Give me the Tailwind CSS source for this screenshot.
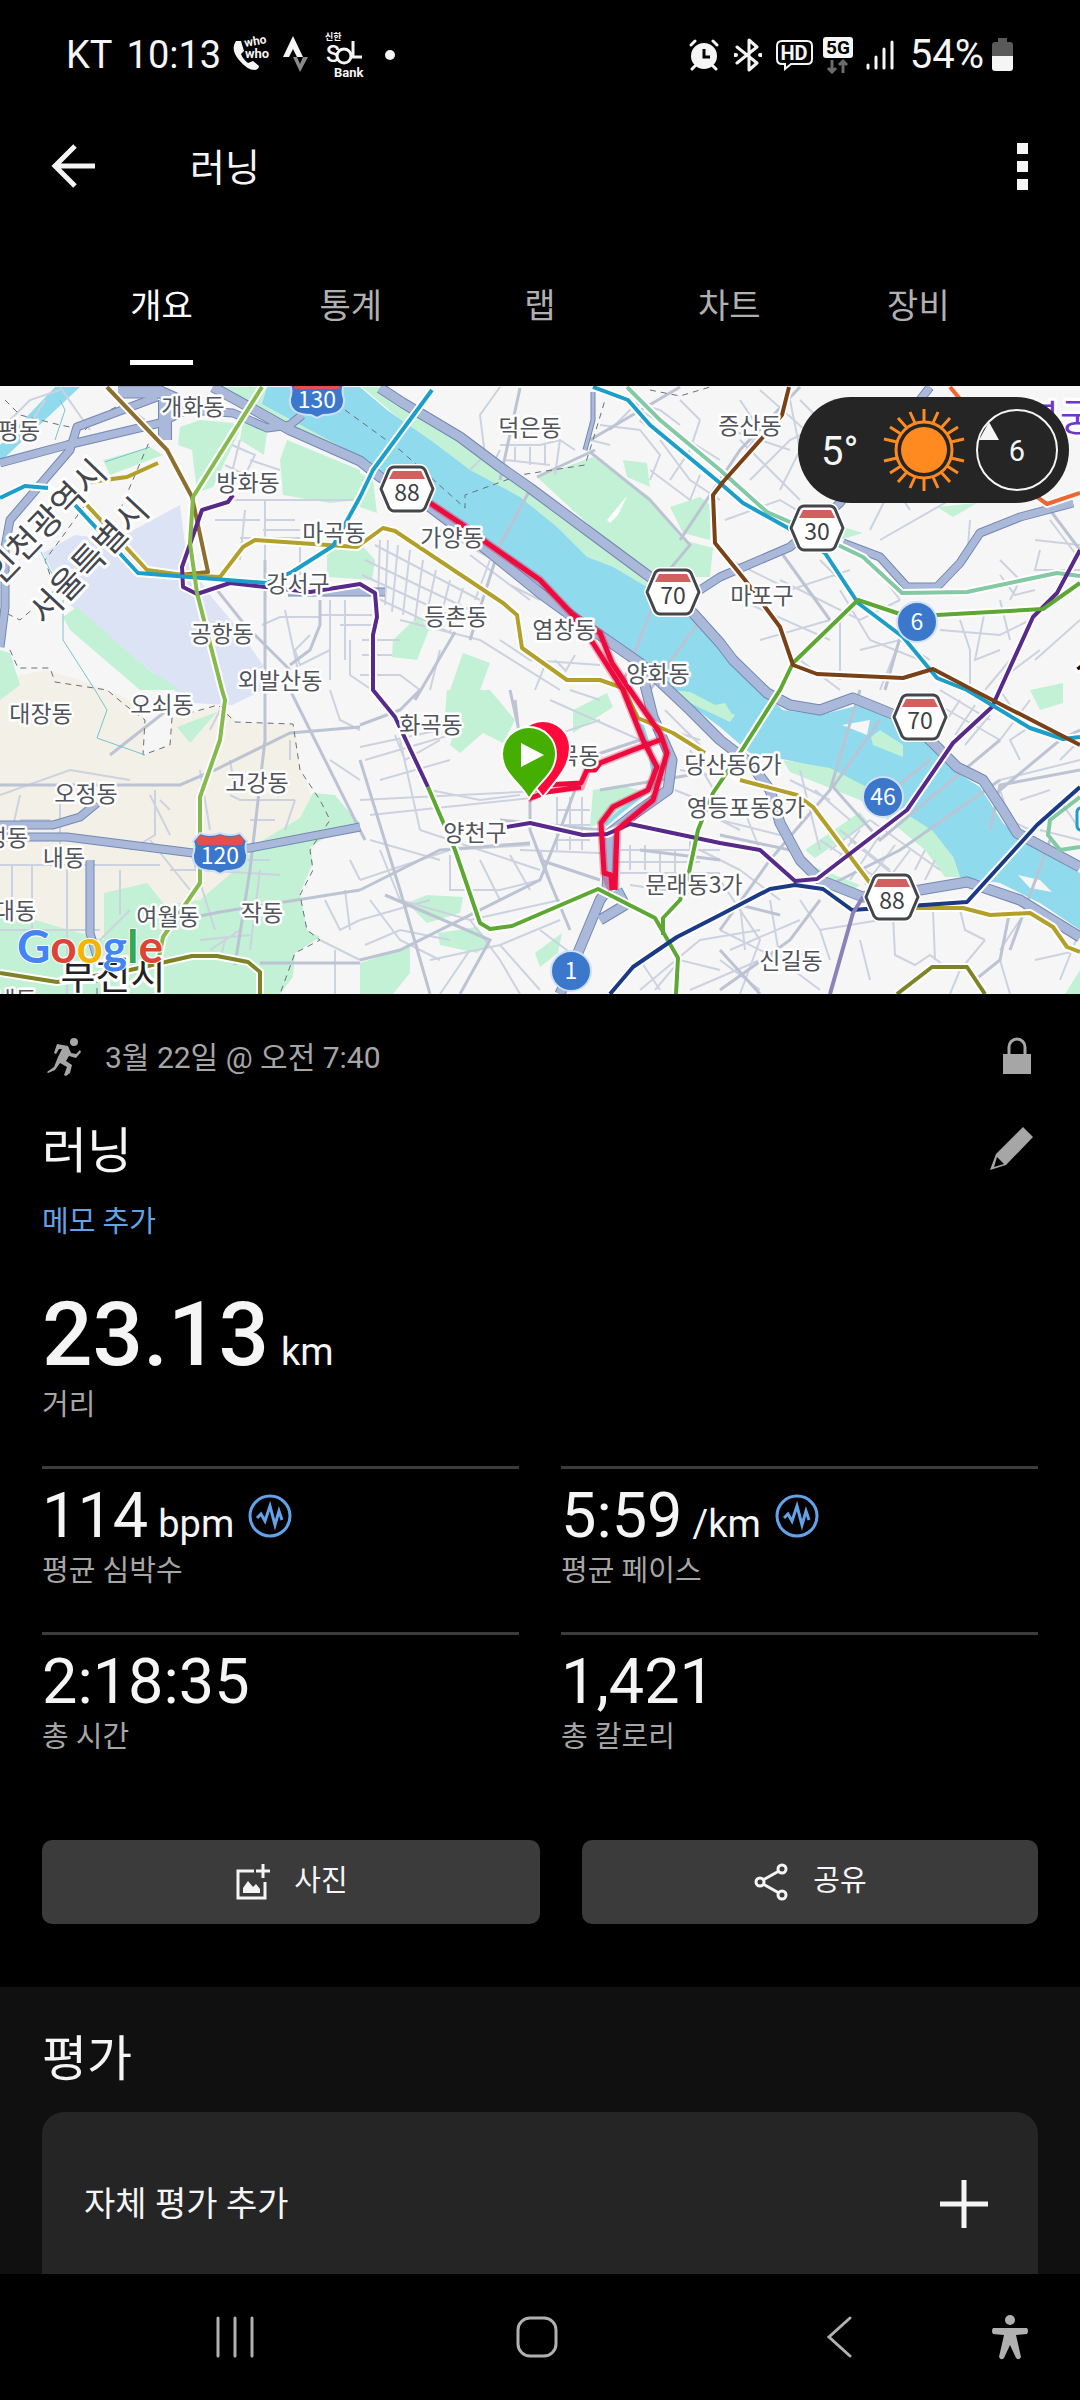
<!DOCTYPE html>
<html lang="ko">
  <head>
    <meta charset="UTF-8" />
    <meta name="viewport" content="width=device-width, initial-scale=1.0" />
    <title>러닝</title>
    <script src="https://cdn.jsdelivr.net/npm/@tailwindcss/browser@4"></script>
  </head>
  <body class="bg-black text-[#f5f5f5] font-[Roboto,'Noto_Sans_CJK_KR',sans-serif]">
    <div class="flex flex-col min-h-screen">
      <!-- status bar -->
      <div class="flex items-center justify-between h-[110px] pl-[66px] pr-[67px] text-[38px] leading-none">
        <div class="flex items-center">
          <span>KT</span>
          <span class="ml-[14px]">10:13</span>
          <svg class="ml-[10px] w-[40px] h-[44px]" viewBox="0 0 40 44" fill="none">
            <path d="M5 8q-6 8 3 19 8 10 16 10 4-1 4-4l-6-5-5 2q-6-5-7-9l3-3-3-10z" fill="#f5f5f5" />
            <text x="14" y="14" font-size="12" font-weight="700" fill="#f5f5f5" transform="rotate(-10 14 14)">who</text>
            <text x="14" y="25" font-size="13" font-weight="700" fill="#f5f5f5">who</text>
          </svg>
          <svg class="ml-3 w-[26px] h-[38px]" viewBox="0 0 26 38">
            <path d="M10 0l10 21h-6l-4-8-4 8H0z" fill="#f5f5f5" />
            <path d="M10 21h4l3 7 3-7h5l-8 15z" fill="#8a8a8a" />
          </svg>
          <svg class="ml-4 w-[40px] h-[48px]" viewBox="0 0 40 48" fill="#f5f5f5">
            <text x="0" y="9" font-size="9" font-weight="700">신한</text>
            <text x="1" y="31" font-size="23" font-weight="500">S</text>
            <path d="M28 10v16h9" fill="none" stroke="#f5f5f5" stroke-width="3" />
            <circle cx="19" cy="25" r="7" fill="#000" stroke="#f5f5f5" stroke-width="3" />
            <text x="9" y="46" font-size="13" font-weight="700">Bank</text>
          </svg>
          <span class="ml-5 size-[10px] rounded-full bg-[#f5f5f5]"></span>
        </div>
        <div class="flex items-center">
          <svg class="w-[30px] h-[32px]" viewBox="0 0 30 32" fill="none" stroke="#f5f5f5" stroke-width="3" stroke-linecap="round">
            <circle cx="15" cy="17" r="13" fill="#f5f5f5" stroke="none" />
            <path d="M2 6l4-4M28 6l-4-4M6 27l-3 3M24 27l3 3" />
            <path d="M15 10v8h6" stroke="#000" stroke-linecap="butt" />
          </svg>
          <svg class="ml-[15px] w-[28px] h-[34px]" viewBox="0 0 28 34" fill="none" stroke="#f5f5f5" stroke-width="3" stroke-linejoin="round" stroke-linecap="round">
            <path d="M3 9l20 16-8 7V2l8 7L3 25" />
            <path d="M1 17h1M26 17h1" stroke-width="4" />
          </svg>
          <svg class="ml-[14px] w-[37px] h-[32px]" viewBox="0 0 37 32" fill="none">
            <path d="M6 2h25q5 0 5 5v13q0 5-5 5H15l-6 5v-5H6q-5 0-5-5V7q0-5 5-5z" stroke="#f5f5f5" stroke-width="2" />
            <text x="18" y="21" font-size="20" font-weight="700" fill="#f5f5f5" text-anchor="middle">HD</text>
          </svg>
          <svg class="ml-[10px] w-[30px] h-[38px]" viewBox="0 0 30 38" fill="none">
            <rect x="0" y="1" width="30" height="21" rx="3" fill="#f5f5f5" />
            <text x="15" y="18" font-size="19" font-weight="700" fill="#000" text-anchor="middle">5G</text>
            <path d="M9 24v12M5 32l4 4 4-4M20 37V25M16 29l4-4 4 4" stroke="#6b6b6b" stroke-width="3" />
          </svg>
          <svg class="ml-[13px] w-[28px] h-[32px]" viewBox="0 0 28 32" stroke="#f5f5f5" stroke-width="3" stroke-linecap="round">
            <path d="M2 26v3M10 18v11M18 10v19M26 3v26" />
          </svg>
          <span class="ml-[16px] text-[40px]">54%</span>
          <svg class="ml-2 w-[21px] h-[34px]" viewBox="0 0 21 34">
            <path d="M6 0h9v4h3q3 0 3 3v11H0V7q0-3 3-3h3z" fill="#5a5a5a" />
            <path d="M0 18h21v12q0 3-3 3H3q-3 0-3-3z" fill="#f5f5f5" />
          </svg>
        </div>
      </div>

      <!-- app bar -->
      <header class="flex items-center h-[112px] pl-[50px] pr-[40px]">
        <button type="button" aria-label="뒤로">
          <svg class="w-[48px] h-[48px]" viewBox="0 0 48 48" fill="none" stroke="#f5f5f5" stroke-width="5">
            <path d="M45 24H6M25 4L5 24l20 20" />
          </svg>
        </button>
        <h1 class="ml-[92px] pt-1 text-[38px] leading-[56px]">러닝</h1>
        <button type="button" aria-label="메뉴" class="ml-auto flex flex-col gap-[7px] px-3">
          <span class="size-[11px] bg-[#f5f5f5]"></span>
          <span class="size-[11px] bg-[#f5f5f5]"></span>
          <span class="size-[11px] bg-[#f5f5f5]"></span>
        </button>
      </header>

      <!-- tabs -->
      <nav class="grid grid-cols-5 justify-items-center px-[67px] pb-[21px] text-[34px] leading-[54px] text-[#b0b0b0]">
        <a href="#" class="pt-[57px] pb-[27px] border-b-[5px] border-white text-white">개요</a>
        <a href="#" class="pt-[57px] pb-[27px] border-b-[5px] border-transparent">통계</a>
        <a href="#" class="pt-[57px] pb-[27px] border-b-[5px] border-transparent">랩</a>
        <a href="#" class="pt-[57px] pb-[27px] border-b-[5px] border-transparent">차트</a>
        <a href="#" class="pt-[57px] pb-[27px] border-b-[5px] border-transparent">장비</a>
      </nav>

      <!-- route map -->
      <div class="relative">
        <svg class="block w-full h-[608px]" viewBox="0 386 1080 608" preserveAspectRatio="xMidYMid slice" fill="none">
          <rect x="0" y="386" width="1080" height="608" fill="#f6f6f7" />
          <!-- land use -->
          <path fill="#f3f0e7" d="M0 680L45 670L80 680L107 690L130 700L145 720L143 755L170 745L172 718L225 705L235 722L293 724L300 765L320 820L310 860L250 890V994H0Z" />
          <path fill="#dce3f5" d="M43 553L75 535L115 540L180 505L187 560L210 595L235 625L263 665V690L232 705L190 703L70 605Z" />
          <g fill="#c2f1d5">
            <path d="M180 427L200 420L233 423L240 430L213 487L197 493L192 450L178 445Z" />
            <path d="M287 440L360 470V500L330 503L283 495L280 460Z" />
            <path d="M225 387H262L362 448V468L300 434Z" />
            <path d="M103 460L150 447L163 455L110 475Z" />
            <path d="M63 617L77 607L117 643L153 673L180 690H140L70 630Z" />
            <path d="M0 650L10 653L20 685L0 700Z" />
            <path d="M327 550L360 543L375 560L372 580L327 577Z" />
            <path d="M243 420L267 432L264 455L240 440Z" />
            <path d="M177 727L217 712L190 743Z" />
            <path d="M104 893L147 883L165 905L200 900L235 870L260 842L300 818L313 793L335 795L350 813L360 823L333 833L310 847L313 863L300 893L307 930L320 937L295 953L293 977L280 994H0V917L35 920L104 940Z" />
            <path d="M447 690H490L515 720L503 743L483 733L460 753L450 745L455 730L445 715Z" />
            <path d="M573 710L607 693L613 707L573 733Z" />
            <path d="M593 790L620 785L650 793L610 820L590 827Z" />
            <path d="M407 903L427 895L463 897L460 913L427 923Z" />
            <path d="M438 933L477 927L490 943L477 953L440 945Z" />
            <path d="M360 963L410 947V973L393 994H360Z" />
            <path d="M535 953L562 933L558 953L540 967Z" />
            <path d="M360 473L373 480L377 513L360 507Z" />
            <path d="M362 387H385L470 440L530 490L600 540L655 590L720 650L690 625L640 588L587 560L520 500L430 445Z" />
            <path d="M537 477L593 457L650 497L683 540L713 548L710 577L660 577L600 535Z" />
            <path d="M670 507L700 497L713 507L710 540L683 533Z" />
            <path d="M623 460L647 463L650 487L627 477Z" />
            <path d="M393 640L417 617L430 627L417 660L392 657Z" />
            <path d="M463 653L490 663L480 690H450Z" />
            <path d="M937 507L977 503L953 517Z" />
            <path d="M843 527L863 533L840 540Z" />
            <path d="M1030 690L1063 683V703L1040 710Z" />
            <path d="M1065 994L1080 970V994Z" />
          </g>
          <path fill="#fff" d="M607 520L627 496L618 515L610 523Z" />
          <!-- river -->
          <path fill="#90daee" d="M267 387H360L387 410L433 442L460 460L520 497L557 527L587 557L613 567L647 587L693 620L720 647L757 688L783 710L820 715L860 705L907 727L933 740L953 770L980 787L1003 823L1020 840L1080 873V930L1040 903L1000 883L960 877L953 857L933 833L897 810L863 787L830 770L787 760L750 753L720 727L670 690L643 663L600 637L573 613L487 543L430 503L360 457L262 404Z" />
          <path fill="#90daee" d="M0 445L55 387H80L0 462Z" />
          <g fill="#c2f1d5">
            <path d="M783 760L830 768L863 785L897 808L933 831L953 857L960 877H945L925 850L895 825L860 800L790 772Z" />
            <path d="M805 850L860 812L868 822L815 858Z" />
            <path d="M810 865L860 885L850 892L815 875Z" />
            <path d="M871 737L880 730L903 745V757L873 745Z" />
            <path d="M673 690L690 692L735 715L730 722L690 703Z" />
            <path d="M433 442L450 440L500 478L520 497L470 470Z" />
            <path d="M715 705L725 703L733 716Z" />
          </g>
          <path fill="#f6f6f7" d="M842 725L870 720L867 735Z M1018 875L1040 880L1052 892L1030 888Z" />
          <!-- minor streets -->
          <g stroke="#ccd2df" stroke-width="2">
            <path d="M235 500H360M265 500V680M240 538H300M245 510L240 560M215 520H260M263 530H300M265 520H295M300 540V575M330 600V680M345 600V660M320 615H372M285 610L300 680M340 625H375M262 625L280 617H320M310 635L295 650L300 665L330 650M350 640V675L372 690" />
            <path d="M232 445L255 455L245 475L225 465M240 440L230 480M250 460L280 470" />
            <path d="M10 420L30 400L60 390M60 387L90 430M120 400L145 420M20 440L45 400" />
            <path d="M380 540L378 600M388 540L385 605M398 545L392 612M410 550L403 615M423 560L415 620M436 570L425 622M450 580L438 628M463 588L450 632M365 560L470 610M362 575L460 620M360 590L455 635M375 545L480 600M440 530L520 575M470 555L530 600M490 560L475 600M510 585L540 600" />
            <path d="M362 640H400M362 655H392M360 675H400L420 690M440 650L430 690M400 620L480 640L560 690M500 640L530 660L600 665M535 690L545 665L560 675M555 660L565 670M575 655L565 672" />
            <path d="M500 387L480 415L485 455L470 470M500 445H540L560 440L575 450M500 450L495 460M515 447V462M530 447V465M545 445V465M505 460L550 465M560 440L555 475M590 440L610 445M600 425L640 430L660 455L650 480M640 410L720 460M660 440L690 480L720 500M670 480L690 450L700 420M620 400L660 410L680 425M610 430L640 400M680 400L700 420M650 470L690 500L700 475" />
            <path d="M740 400L760 430L740 460M730 430L790 450M750 480L790 440L830 420M790 400L800 450L780 490M740 440L800 500M760 390L850 470M820 420L800 400M725 520L780 500L830 530M730 560L790 590L850 570M740 600L830 640M780 580L860 620L900 600M760 640L830 620M800 660L840 690M840 620V680M870 560L900 600M890 490L870 530M910 510L890 480M880 540L950 500M840 590L870 640L920 660M900 640L880 690M960 620L970 650V690M985 610L975 660L1000 650M1000 600L1010 640M940 630L1000 635L1030 620M1000 560L1020 580L1010 600M1035 540L1080 545M1040 550L1035 570H1080M1050 520L1080 560M860 650L900 640L930 660M820 560L850 590M970 520L967 560M1000 575L1015 595L1035 590M1035 660L1080 620M1000 680L1040 650M985 690L1010 660" />
            <path d="M360 747L440 730M365 760L450 735M360 800L560 790M370 815L540 797M395 735L405 760L440 740M380 780L450 760M430 790L480 800L520 795M400 740L420 830M420 830L480 850L540 870M370 840L440 860M360 880L450 850L530 845M380 850L400 900M450 855V890L500 890L540 880M480 860L500 900M510 855L530 890M540 850L550 880M400 900L470 920L560 900M370 900L400 940L440 960M360 920L430 900M470 920L500 960L520 994M430 960L500 945L560 920M440 994L470 950M500 945L540 990M365 945L400 930L450 940M540 930L580 960M557 797V850M570 797V850M582 797V850M557 810H590M555 825H590M555 840H590M520 850L600 853M620 850H720M630 845V870M645 845V870M660 850V880M675 850V890M690 840V880M610 862H700M620 873H720M630 885L700 895" />
            <path d="M540 740L600 720M550 700L640 740M570 690L600 700M670 730L700 740M665 710L700 745M680 770L710 775M675 790L700 800M690 750L720 800M700 810L740 830M720 820L780 835M740 800L760 850M700 850L740 870" />
            <path d="M740 870L780 900M720 880L760 940L740 994M720 930L780 960L820 950M730 950L800 920M770 900L780 960L820 990M800 900L820 930L880 920M820 930L830 960M860 940L870 980M893 915L895 955L915 965L930 955L950 970M960 910L965 930L985 940M985 940L960 970L950 994M1000 960L1010 994M933 910L935 960M1080 930L1060 980M1035 960L1080 950M720 960L760 990M640 990L700 940L760 930M655 990L680 960L720 970M690 990L760 960M640 960L660 990M740 905L745 950M1020 920L1000 950" />
            <path d="M790 780L830 800M800 770L820 850M815 790L850 820M830 850L870 820M820 840L880 880M840 830L890 870M860 830L830 870M880 835L850 880M895 845L865 885M910 850L880 890M850 840L900 880M870 820L940 870M925 850L915 870M935 860L925 880" />
            <path d="M930 700L1000 740M940 690L990 720M960 700L940 730M975 705L955 735M990 715L965 745M1000 740L1030 700M1020 720L1000 690M1040 720L1010 740L1020 760M1000 780L1080 760M1080 740L1060 760M1000 790L1010 820L1030 830M1020 800L1050 790M1040 830L1080 840M1060 800L1080 830" />
            <path d="M0 795L70 770L100 775L130 780M20 795L10 840M50 820H20M60 800V860M0 865H160M12 865V920M32 865V930M67 850V994M42 930H100M0 930H60M120 870V915M155 790V835L130 850M150 795L170 835M200 770L210 830M160 800L170 810M230 795L240 800L295 800M235 790L230 760M295 800L285 830M250 820H275M240 860H270M210 730L225 700M190 850L215 930M260 870L250 950M290 740V760M330 690L340 720L360 730M330 760L360 780M350 860L360 880M325 900L340 930L360 920M345 890L350 930M320 940L360 960M335 950V994M150 840L190 890M130 910L100 940M170 870H200L280 875M210 950L240 930M225 940L220 960M200 940L250 935" />
          </g>
          <g stroke="#bcc3d3" stroke-width="3">
            <path d="M0 785H180L215 770L290 733L360 727M265 560V740L250 870L235 965M320 600V625L310 650L290 665M290 690L365 840M217 590L245 625L290 670M180 920L220 912L360 890M260 963H360M110 755L180 700" />
            <path d="M520 388L500 480M590 440L680 387M590 452L650 500L690 545L665 575L620 690M595 450L537 477M530 490L500 545L470 640M640 420L720 480M680 540L740 450L800 387M700 620L650 690M455 632L415 700M510 690L530 780V830L545 870M360 725L400 710L420 690M515 700L522 760L530 790M595 755L640 740M600 790L690 775M360 890L440 850L530 843M385 895L490 940L460 994M360 760L400 890L430 994M360 960L400 950L540 880L560 830L575 790M600 830L500 820M600 880L540 860M545 870L570 930M640 850L720 860" />
            <path d="M860 690L830 790L770 860L720 930M880 720L833 787L880 840L1000 740M930 760L880 800M1000 780L900 850L820 890M1010 950L1050 840M1080 770L1000 785L990 830M1000 790L1060 740L1080 730M720 990L790 940L820 900M720 950L760 994M720 835L790 850M1010 910L1000 960L975 980M740 905L780 915M783 555L830 620M905 620L885 690M1050 510L1080 550" />
          </g>
          <!-- administrative borders -->
          <g stroke="#6b6f78" stroke-width="1" stroke-dasharray="6 5">
            <path d="M5 400L20 415L60 425L85 430L100 415L130 400M120 510L150 440M85 505L60 540L45 560L55 590L20 620L0 610M10 650L18 668L50 668L55 682L107 690L125 705L145 720L143 755L170 745L172 718L218 705L235 722L293 724L300 770L320 800L330 820L310 850L313 870L300 895L307 930L320 940L295 953L280 994" />
            <path d="M345 410L400 450L465 508V495L520 475L585 465L593 440L605 400M650 390L680 396L710 387M97 994V980" />
          </g>
          <g stroke="#79c3cf" stroke-width="1">
            <path d="M63 600V640L95 690L107 710L97 738L145 755M40 550L60 590M105 462L150 447M60 400L65 410L55 440" />
          </g>
          <!-- expressways -->
          <g stroke="#7388b3" stroke-width="9" stroke-linejoin="round">
            <path d="M0 463L67 445L160 423L187 410L233 413L267 428L290 425L302 415" />
            <path d="M157 397L77 427L70 450L10 520L5 547V607L0 647" />
            <path d="M213 387L260 413L290 430L360 461L380 477L430 507L487 550L540 593L573 617L607 640L640 663L690 710L720 740L750 763L770 790L780 823L800 860L820 880L863 897L920 890L967 882L1020 900L1080 937" stroke-width="11" />
            <path d="M118 392H160L178 400" stroke-width="13" />
            <path d="M165 400V440" stroke-width="14" />
            <path d="M593 392V420L585 450" stroke-width="5" />
            <path d="M380 388L403 403L460 437L500 467L530 488L600 540L650 577L693 613L720 643L733 660L767 693L790 705L820 710L853 698L907 720L933 743L957 767L983 780L1003 810L1017 833L1080 867" stroke-width="11" />
            <path d="M700 590L720 577L790 547L840 503L930 387" />
            <path d="M843 543L880 557L907 587H937L960 563L980 533L1020 517L1073 503" />
            <path d="M0 825H53L80 817L97 803M0 837H67L193 853L250 848L360 827M90 860V933L97 957" />
            <path d="M640 665L653 717L672 760L668 790L637 812L610 833L607 890L600 900L577 955L560 994M617 890L625 905L600 920" stroke-width="11" />
            <path d="M288 592H385" />
          </g>
          <g stroke="#aab9d9" stroke-width="7" stroke-linejoin="round">
            <path d="M0 463L67 445L160 423L187 410L233 413L267 428L290 425L302 415" />
            <path d="M157 397L77 427L70 450L10 520L5 547V607L0 647" />
            <path d="M213 387L260 413L290 430L360 461L380 477L430 507L487 550L540 593L573 617L607 640L640 663L690 710L720 740L750 763L770 790L780 823L800 860L820 880L863 897L920 890L967 882L1020 900L1080 937" stroke-width="9" />
            <path d="M118 392H160L178 400" stroke-width="11" />
            <path d="M165 400V440" stroke-width="12" />
            <path d="M593 392V420L585 450" stroke-width="3" />
            <path d="M380 388L403 403L460 437L500 467L530 488L600 540L650 577L693 613L720 643L733 660L767 693L790 705L820 710L853 698L907 720L933 743L957 767L983 780L1003 810L1017 833L1080 867" stroke-width="9" />
            <path d="M700 590L720 577L790 547L840 503L930 387" />
            <path d="M843 543L880 557L907 587H937L960 563L980 533L1020 517L1073 503" />
            <path d="M0 825H53L80 817L97 803M0 837H67L193 853L250 848L360 827M90 860V933L97 957" />
            <path d="M640 665L653 717L672 760L668 790L637 812L610 833L607 890L600 900L577 955L560 994M617 890L625 905L600 920" stroke-width="9" />
            <path d="M288 592H385" />
          </g>
          <path stroke="#90daee" stroke-width="4" d="M640 720L650 750L655 785L620 812L605 825" />

          <!-- subway lines -->
          <g stroke="#fff" stroke-width="8" stroke-linejoin="round">
            <path d="M107 387L167 450L192 497L208 572L180 575" />
            <path d="M85 503L147 570L183 575L220 577L243 547L255 540L357 547L383 528L395 531L503 603L517 615L522 648L567 680H600L623 688L638 718L673 733L705 753L740 780L797 795L813 807L870 883L890 908H963L990 915L1030 913L1053 927L1067 947L1080 952" />
            <path d="M262 387L193 497L190 543L197 593L222 690L225 700L220 740L200 797V883L163 937L157 967" />
            <path d="M0 498L25 486L48 488L75 505L138 573L267 583L292 572L333 546L360 497L373 470L432 390" />
            <path d="M593 387L628 400L650 425L720 483L743 503L788 528L825 553L858 603L903 637L937 678L967 690L1030 728L1063 739L1080 737" />
            <path d="M233 495L228 502L202 510L182 567L183 587L197 594L230 583L310 592L360 584L375 593L377 617L373 635V690L395 717L428 787L455 850L480 923L490 929L512 926L598 889L655 918L678 958L676 994" />
            <path d="M1080 583L1043 609L937 615L897 613L858 600L793 663L780 690L740 753L713 793L698 830L688 877L680 900L663 918V935" />
            <path d="M507 827L530 823L583 835L607 834L630 824L720 843L760 850L795 881L817 879L907 810L953 743L992 707L1033 617L1057 593L1080 550" />
            <path d="M610 994L633 967L677 937L720 915L770 889L795 885L823 889L852 910L967 902L1037 825L1080 787" />
            <path d="M897 994L932 967H967L985 994M0 973L57 982L130 970L192 956H217L248 962L260 972V994" />
            <path d="M789 387L782 415L763 437L723 482L713 495L715 543L745 580L780 627L793 665L817 674L903 678L933 669L973 690L1080 745" />
            <path d="M627 387L660 420L720 470L767 512L790 522L863 557L902 593L967 592L1057 573L1080 576" />
            <path d="M1037 497L1047 504L1080 493" />
          </g>
          <g stroke-width="4" stroke-linejoin="round">
            <path stroke="#8d6e2c" d="M107 387L167 450L192 497L208 572L180 575" />
            <path stroke="#b3a02a" d="M158 463L127 477L90 482M85 503L147 570L183 575L220 577L243 547L255 540L357 547L383 528L395 531L503 603L517 615L522 648L567 680H600L623 688L638 718L673 733L705 753M740 780L797 795L813 807L870 883L890 908H963L990 915L1030 913L1053 927L1067 947L1080 952" />
            <path stroke="#82c9a4" d="M627 387L660 420L720 470L767 512L790 522L863 557L902 593L967 592L1057 573L1080 576M1080 797L1050 820L1048 835L1060 850L1080 847" />
            <path stroke="#57298a" d="M233 495L228 502L202 510L182 567L183 587L197 594L230 583L310 592L360 584L375 593L377 617L373 635V690L395 717L428 787M507 827L530 823L583 835L607 834L630 824L720 843L760 850L795 881L817 879L907 810L953 743L992 707L1033 617L1057 593L1080 550" />
            <path stroke="#1c9ecb" d="M0 498L25 486L48 488M75 505L138 573L267 583L292 572L333 546L360 497L373 470L432 390M593 387L628 400L650 425L720 483L743 503L788 528L825 553L858 603L903 637L937 678L967 690L1030 728L1063 739L1080 737" />
            <path stroke="#84bb4c" d="M262 387L193 497L190 543L197 593L222 690L225 700L220 740L200 797V883L163 937L157 967" />
            <path stroke="#5da832" d="M428 787L455 850L480 923L490 929L512 926L598 889L655 918L678 958L676 994M1080 583L1043 609L937 615L897 613L858 600L793 663L780 690L740 753L713 793L698 830L688 877L680 900L663 918V935" />
            <path stroke="#1a3a86" d="M610 994L633 967L677 937L720 915L770 889L795 885L823 889L852 910L967 902L1037 825L1080 787" />
            <path stroke="#8d82b8" d="M863 897L853 913L830 994" />
            <path stroke="#7e8426" d="M897 994L932 967H967L985 994M0 973L57 982L130 970L192 956H217L248 962L260 972V994" />
            <path stroke="#7b4116" d="M789 387L782 415L763 437L723 482L713 495L715 543L745 580L780 627L793 665L817 674L903 678L933 669L973 690L1080 745" />
            <path stroke="#ee6730" d="M950 387L960 399M1037 497L1047 504L1080 493" />
          </g>

          <!-- recorded route -->
          <g stroke="#e8003a" stroke-opacity="0.3" stroke-width="8" stroke-linejoin="round">
            <path d="M430 503L463 525L487 543L540 580L573 615L593 643L623 690L643 740L657 767L648 790L613 807L601 823L604 873L612 890" />
            <path d="M573 615L600 633L612 663L630 690L660 733L667 753L653 800L617 830L615 890M660 740L633 750L600 763L587 770L581 787L547 790L528 799" />
          </g>
          <g stroke="#ee0a3c" stroke-width="5" stroke-linejoin="round">
            <path d="M430 503L463 525L487 543L540 580L573 615L593 643L623 690L643 740L657 767L648 790L613 807L601 823L604 873L611 875L612 890" />
            <path d="M573 615L600 633L612 663L630 690L660 733L667 753L653 800L617 830L615 890M660 740L633 750L600 763L595 770H587L581 783L545 785M581 787L547 792L528 799" />
          </g>

          <!-- place names -->
          <g font-family="'Noto Sans CJK KR', sans-serif" font-size="23" fill="#51545b" stroke="#fff" stroke-width="5" stroke-linejoin="round" paint-order="stroke" text-anchor="middle">
            <text x="193" y="415">개화동</text>
            <text x="19" y="439">평동</text>
            <text x="248" y="491">방화동</text>
            <text x="334" y="541">마곡동</text>
            <text x="298" y="592">강서구</text>
            <text x="222" y="642">공항동</text>
            <text x="280" y="689">외발산동</text>
            <text x="530" y="436">덕은동</text>
            <text x="452" y="546">가양동</text>
            <text x="456" y="625">등촌동</text>
            <text x="564" y="638">염창동</text>
            <text x="658" y="682">양화동</text>
            <text x="750" y="434">증산동</text>
            <text x="762" y="604">마포구</text>
            <text x="41" y="722">대장동</text>
            <text x="162" y="713">오쇠동</text>
            <text x="86" y="802">오정동</text>
            <text x="257" y="791">고강동</text>
            <text x="7" y="846">성동</text>
            <text x="64" y="866">내동</text>
            <text x="15" y="919">대동</text>
            <text x="168" y="925">여월동</text>
            <text x="262" y="921">작동</text>
            <text x="431" y="733">화곡동</text>
            <text x="568" y="764">신목동</text>
            <text x="475" y="841">양천구</text>
            <text x="733" y="773">당산동6가</text>
            <text x="746" y="816">영등포동8가</text>
            <text x="694" y="893">문래동3가</text>
            <text x="791" y="969">신길동</text>
            <text x="5" y="1008">송내동</text>
          </g>
          <g font-family="'Noto Sans CJK KR', sans-serif" fill="#43464c" stroke="#fff" stroke-width="6" stroke-linejoin="round" paint-order="stroke" text-anchor="middle">
            <text x="0" y="12" font-size="34" transform="translate(46 522) rotate(-46)">인천광역시</text>
            <text x="0" y="12" font-size="34" transform="translate(89 561) rotate(-47)">서울특별시</text>
            <text x="113" y="989" font-size="38" fill="#222">부천시</text>
            <text x="1060" y="431" font-size="38" fill="#6d37cf">복궁</text>
            <text x="1092" y="674" font-size="38" fill="#111">서</text>
          </g>
          <rect x="1077" y="808" width="20" height="22" rx="4" fill="#fff" stroke="#1c9ecb" stroke-width="3" />

          <!-- road shields -->
          <defs>
            <g id="hex">
              <path d="M-26 0L-18-19Q-16-22-13-22H13Q16-22 18-19L26 0L18 19Q16 22 13 22H-13Q-16 22-18 19Z" fill="#fff" stroke="#fff" stroke-width="6" stroke-linejoin="round" />
              <path d="M-26 0L-18-19Q-16-22-13-22H13Q16-22 18-19L26 0L18 19Q16 22 13 22H-13Q-16 22-18 19Z" fill="#fff" stroke="#43464a" stroke-width="3" stroke-linejoin="round" />
              <path d="M-14-18H14L18-10H-18Z" fill="#d3605f" />
            </g>
            <g id="shield">
              <path d="M-20-20Q-10-16 0-20Q10-16 20-20L27-12Q24-7 27 2Q28 18 6 18L0 21L-6 18Q-28 18-27 2Q-24-7-27-12Z" fill="#3b78cc" stroke="#cfe0fa" stroke-width="2" />
              <path d="M-20-18Q-10-14 0-18Q10-14 20-18L24-13L22-8H-22L-24-13Z" fill="#e0504d" />
            </g>
          </defs>
          <g font-family="'Noto Sans CJK KR', sans-serif" font-size="23" fill="#3c3f44" text-anchor="middle">
            <use href="#hex" x="407" y="489" /><text x="407" y="501">88</text>
            <use href="#hex" x="673" y="592" /><text x="673" y="604">70</text>
            <use href="#hex" x="817" y="528" /><text x="817" y="540">30</text>
            <use href="#hex" x="920" y="717" /><text x="920" y="729">70</text>
            <use href="#hex" x="892" y="897" /><text x="892" y="909">88</text>
          </g>
          <g font-family="'Noto Sans CJK KR', sans-serif" font-size="23" fill="#fff" text-anchor="middle">
            <use href="#shield" x="317" y="397" /><text x="317" y="408">130</text>
            <use href="#shield" x="220" y="853" /><text x="220" y="864">120</text>
            <circle cx="917" cy="622" r="20" fill="#3b78cc" stroke="#cfe0fa" stroke-width="2" /><text x="917" y="630">6</text>
            <circle cx="883" cy="797" r="20" fill="#3b78cc" stroke="#cfe0fa" stroke-width="2" /><text x="883" y="805">46</text>
            <circle cx="571" cy="971" r="20" fill="#3b78cc" stroke="#cfe0fa" stroke-width="2" /><text x="571" y="979">1</text>
          </g>

          <!-- finish and start pins -->
          <path d="M543 797C530 780 516 768 516 748A27 27 0 0 1 570 748C570 768 556 780 543 797Z" fill="#ff0a3a" stroke="#fff" stroke-width="2" />
          <path d="M529 799C520 782 502 774 502 754A27 27 0 0 1 556 754C556 774 538 782 529 799Z" fill="#45ae00" stroke="#fff" stroke-width="2" />
          <path d="M521 743L544 755L521 767Z" fill="#fff" />

          <text x="17" y="963" font-family="Lato, sans-serif" font-size="46" font-weight="700" stroke="#fff" stroke-width="2" paint-order="stroke"><tspan fill="#4485f4">G</tspan><tspan fill="#db4437">o</tspan><tspan fill="#f4b400">o</tspan><tspan fill="#4485f4">g</tspan><tspan fill="#35a853">l</tspan><tspan fill="#db4437">e</tspan></text>
        </svg>

        <!-- weather -->
        <div class="absolute top-[11px] right-[11px] flex items-center h-[106px] w-[271px] pl-[23px] rounded-full bg-[#252525]">
          <span class="w-[60px] pt-1 text-[40px] leading-none">5°</span>
          <svg class="w-[86px] h-[86px]" viewBox="-43 -43 86 86" fill="none" stroke="#ff8a1f" stroke-width="3">
            <circle r="23" fill="#ff8a1f" stroke="none" />
            <circle r="28" />
            <path d="M0-28V-41M9-27L14-38M17-22L26-32M23-16L34-23M27-8L40-11M27 8L40 11M23 16L34 23M17 22L26 32M9 27L14 38M0 28V41M-9 27L-14 38M-17 22L-26 32M-23 16L-34 23M-27 8L-40 11M-27-8L-40-11M-23-16L-34-23M-17-22L-26-32M-9-27L-14-38" />
          </svg>
          <svg class="ml-2 w-[84px] h-[84px]" viewBox="-42 -42 84 84" fill="none">
            <circle r="40" stroke="#f5f5f5" stroke-width="2" />
            <path d="M-38-10L-28-28L-18-10Z" fill="#f5f5f5" />
            <text x="0" y="11" font-size="29" fill="#f5f5f5" text-anchor="middle">6</text>
          </svg>
        </div>
      </div>

      <!-- activity summary -->
      <main class="px-[42px] pt-[34px] pb-[63px]">
        <div class="flex items-center h-[56px] text-[#a6a6a6]">
          <svg class="w-[42px] h-[42px]" viewBox="0 0 42 42" fill="#a6a6a6">
            <circle cx="32" cy="7" r="4" />
            <path d="M15 9L26 11L29 18L34 19L38 15L39 17L34 23L27 21L24 26L30 30L28 38L24 41L22 40L25 32L18 28L13 35L6 38L5 37L12 32L16 22L20 14H17L14 19L12 18Z" />
          </svg>
          <span class="ml-[21px] pt-1 text-[30px] leading-[40px]">3월 22일 @ 오전 7:40</span>
          <svg class="ml-auto w-[42px] h-[42px]" viewBox="0 0 42 42" fill="none">
            <path d="M13 20V12a8 8 0 0 1 16 0v8" stroke="#a6a6a6" stroke-width="3" />
            <rect x="7" y="19" width="28" height="20" fill="#a6a6a6" />
          </svg>
        </div>
        <div class="flex items-center justify-between mt-[22px] h-[88px]">
          <h2 class="pt-1 text-[49px] leading-[70px]">러닝</h2>
          <button type="button" aria-label="이름 편집">
            <svg class="w-[48px] h-[48px]" viewBox="0 0 48 48">
              <path d="M33 1L43 11L16 39L0 44L6 28Z" fill="#a6a6a6" />
              <path d="M7 31L14 38L4 41Z" fill="#000" />
            </svg>
          </button>
        </div>
        <a href="#" class="block w-max text-[29px] leading-[56px] text-[#62a2e8]">메모 추가</a>

        <p class="flex items-baseline mt-[35px] text-[89px] leading-[100px] font-medium">23.13<span class="ml-3 text-[38px] leading-none font-normal">km</span></p>
        <p class="text-[29px] leading-[40px] text-[#a6a6a6]">거리</p>

        <div class="grid grid-cols-2 gap-x-[42px] mt-[41px]">
          <div class="border-t-3 border-[#3c3c3c] pt-[15px] pb-[41px]">
            <div class="flex items-center">
              <p class="flex items-baseline text-[63px] leading-[64px]">114<span class="ml-[10px] text-[38px] leading-none">bpm</span></p>
              <svg class="ml-[13px] w-[46px] h-[46px]" viewBox="0 0 46 46" fill="none" stroke="#62a2e8" stroke-width="3">
                <circle cx="23" cy="23" r="20" />
                <path d="M10 25L14 21L18 28L23 13L28 32L32 18L35 27" />
              </svg>
            </div>
            <p class="mt-[3px] text-[29px] leading-[40px] text-[#a6a6a6]">평균 심박수</p>
          </div>
          <div class="border-t-3 border-[#3c3c3c] pt-[15px] pb-[41px]">
            <div class="flex items-center">
              <p class="flex items-baseline text-[63px] leading-[64px]">5:59<span class="ml-[10px] text-[38px] leading-none">/km</span></p>
              <svg class="ml-[13px] w-[46px] h-[46px]" viewBox="0 0 46 46" fill="none" stroke="#62a2e8" stroke-width="3">
                <circle cx="23" cy="23" r="20" />
                <path d="M10 25L14 21L18 28L23 13L28 32L32 18L35 27" />
              </svg>
            </div>
            <p class="mt-[3px] text-[29px] leading-[40px] text-[#a6a6a6]">평균 페이스</p>
          </div>
          <div class="border-t-3 border-[#3c3c3c] pt-[15px] pb-[41px]">
            <p class="text-[63px] leading-[64px]">2:18:35</p>
            <p class="mt-[3px] text-[29px] leading-[40px] text-[#a6a6a6]">총 시간</p>
          </div>
          <div class="border-t-3 border-[#3c3c3c] pt-[15px] pb-[41px]">
            <p class="text-[63px] leading-[64px]">1,421</p>
            <p class="mt-[3px] text-[29px] leading-[40px] text-[#a6a6a6]">총 칼로리</p>
          </div>
        </div>

        <div class="grid grid-cols-[498fr_456fr] gap-[42px] mt-[42px] text-[29px]">
          <button type="button" class="flex items-center justify-center gap-[22px] h-[84px] rounded-[10px] bg-[#3b3b3b]">
            <svg class="w-[38px] h-[38px]" viewBox="0 0 38 38" fill="none" stroke="#f5f5f5" stroke-width="3">
              <path d="M20 8H4V35H31V19M29 1V15M22 8H36" />
              <path d="M9 30V25L14 18L19 24L22 21L26 26V30Z" fill="#f5f5f5" stroke="none" />
            </svg>
            사진
          </button>
          <button type="button" class="flex items-center justify-center gap-[22px] h-[84px] rounded-[10px] bg-[#3b3b3b]">
            <svg class="w-[38px] h-[38px]" viewBox="0 0 38 38" fill="none" stroke="#f5f5f5" stroke-width="3">
              <path d="M10 17L26 8M10 21L26 30" />
              <circle cx="7" cy="19" r="4" />
              <circle cx="29" cy="6" r="4" />
              <circle cx="29" cy="32" r="4" />
            </svg>
            공유
          </button>
        </div>
      </main>

      <!-- self evaluation -->
      <section class="flex-1 px-[42px] pt-[38px] bg-[#101010]">
        <h2 class="text-[49px] leading-[70px]">평가</h2>
        <button type="button" class="flex items-center justify-between w-full mt-[17px] pt-[62px] pb-[40px] pl-[42px] pr-[48px] rounded-t-[22px] bg-[#252525] text-[34px] leading-[60px]">
          자체 평가 추가
          <svg class="w-[52px] h-[52px]" viewBox="0 0 52 52" stroke="#f5f5f5" stroke-width="5">
            <path d="M26 2V50M2 26H50" />
          </svg>
        </button>
      </section>

      <!-- system navigation -->
      <nav class="flex items-center h-[126px] pl-[84px] pr-[50px] bg-black">
        <button type="button" aria-label="최근 앱" class="flex-1 flex justify-center">
          <svg class="w-[42px] h-[42px]" viewBox="0 0 42 42" stroke="#b0b0b0" stroke-width="3" stroke-linecap="round">
            <path d="M4 2V40M21 2V40M38 2V40" />
          </svg>
        </button>
        <button type="button" aria-label="홈" class="flex-1 flex justify-center">
          <svg class="w-[42px] h-[42px]" viewBox="0 0 42 42" fill="none" stroke="#b0b0b0" stroke-width="3">
            <rect x="2" y="2" width="38" height="38" rx="12" />
          </svg>
        </button>
        <button type="button" aria-label="뒤로 가기" class="flex-1 flex justify-center">
          <svg class="w-[42px] h-[42px]" viewBox="0 0 42 42" fill="none" stroke="#b0b0b0" stroke-width="3" stroke-linecap="round">
            <path d="M32 2L11 21L32 40" />
          </svg>
        </button>
        <button type="button" aria-label="접근성" class="w-10 flex justify-center">
          <svg class="w-[38px] h-[46px]" viewBox="0 0 38 46" fill="#b0b0b0">
            <circle cx="19" cy="6" r="5" />
            <path d="M2 14H36Q38 17 36 20L25 21L30 43Q28 47 25 44L19 31L13 44Q10 47 8 43L13 21L2 20Q0 17 2 14Z" />
          </svg>
        </button>
      </nav>
    </div>
  </body>
</html>
